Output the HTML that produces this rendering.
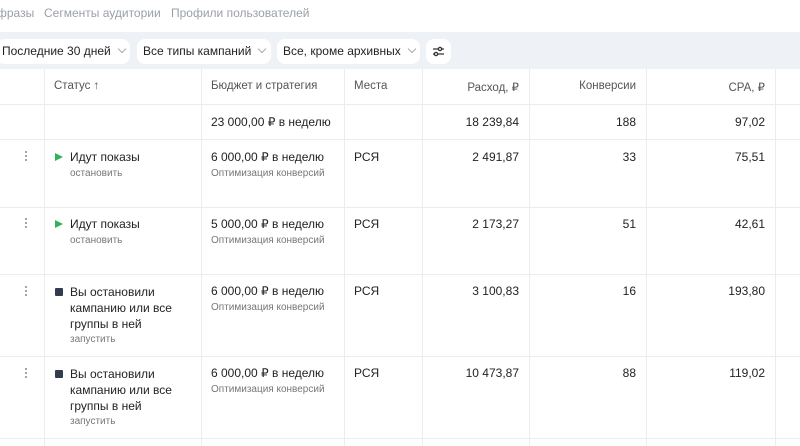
<!DOCTYPE html>
<html><head><meta charset="utf-8"><style>
*{margin:0;padding:0;box-sizing:border-box}
body{width:800px;height:446px;overflow:hidden;background:#fff;font-family:"Liberation Sans",sans-serif;color:#222;position:relative;font-size:12px}
.a{position:absolute;white-space:nowrap}
.tabs{top:6px;font-size:12px;color:#9aa0a8}
.band{position:absolute;left:0;top:32px;width:800px;height:37px;background:#eef1f6}
.btn{position:absolute;top:39px;height:25px;background:#fff;border-radius:8px;font-size:12px;color:#222;padding:5px 0 0 6px}
.chev{display:inline-block;width:6px;height:6px;border-right:1px solid #aaa;border-bottom:1px solid #aaa;transform:rotate(45deg);margin-left:8px;position:relative;top:-3px}
.vl{position:absolute;top:69px;height:377px;width:1px;background:#ececec}
.hl{position:absolute;left:0;width:800px;height:1px;background:#ececec}
.h{top:80px;color:#555;font-size:11.5px}
.r{text-align:right}
.sm{font-size:10px;color:#777}
.dots{position:absolute;left:25px;width:3px}
.dots i{display:block;width:2px;height:2px;background:#888;margin-bottom:2px;border-radius:1px}
.play{position:absolute;width:0;height:0;border-left:8px solid #2db45a;border-top:4.5px solid transparent;border-bottom:4.5px solid transparent}
.sq{position:absolute;width:8px;height:8px;background:#333c4e;border-radius:1px}
</style></head><body>
<div class="a tabs" style="left:-3px">фразы</div>
<div class="a tabs" style="left:44px">Сегменты аудитории</div>
<div class="a tabs" style="left:171px">Профили пользователей</div>
<div class="band"></div>
<div class="btn" style="left:-4px;width:134px">Последние 30 дней<span class="chev"></span></div>
<div class="btn" style="left:137px;width:134px">Все типы кампаний<span class="chev"></span></div>
<div class="btn" style="left:277px;width:143px">Все, кроме архивных<span class="chev"></span></div>
<div class="btn" style="left:426px;width:25px;padding:0"><svg width="25" height="25" viewBox="0 0 25 25"><g stroke="#333" stroke-width="1.3" fill="none"><path d="M7 10h11M7 15h11"/><circle cx="14" cy="10" r="1.6" fill="#fff"/><circle cx="10" cy="15" r="1.6" fill="#fff"/></g></svg></div>

<div class="vl" style="left:44px"></div><div class="vl" style="left:201px"></div><div class="vl" style="left:344px"></div><div class="vl" style="left:422px"></div><div class="vl" style="left:529px"></div><div class="vl" style="left:646px"></div><div class="vl" style="left:775px"></div>
<div class="hl" style="top:104px"></div><div class="hl" style="top:139px"></div><div class="hl" style="top:207px"></div><div class="hl" style="top:274px"></div><div class="hl" style="top:356px"></div><div class="hl" style="top:438px"></div>

<div class="a h" style="left:54px">Статус ↑</div>
<div class="a h" style="left:211px">Бюджет и стратегия</div>
<div class="a h" style="left:354px">Места</div>
<div class="a h r" style="right:281px">Расход, ₽</div>
<div class="a h r" style="right:164px">Конверсии</div>
<div class="a h r" style="right:35px">CPA, ₽</div>

<div class="a" style="left:211px;top:115px">23 000,00 ₽ в неделю</div>
<div class="a r" style="right:281px;top:115px">18 239,84</div>
<div class="a r" style="right:164px;top:115px">188</div>
<div class="a r" style="right:35px;top:115px">97,02</div>

<!-- row1 -->
<div class="dots" style="top:151px"><i></i><i></i><i></i></div>
<div class="play" style="left:55px;top:153px"></div>
<div class="a" style="left:70px;top:150px">Идут показы</div>
<div class="a sm" style="left:70px;top:168px">остановить</div>
<div class="a" style="left:211px;top:150px">6 000,00 ₽ в неделю</div>
<div class="a sm" style="left:211px;top:168px">Оптимизация конверсий</div>
<div class="a" style="left:354px;top:150px">РСЯ</div>
<div class="a r" style="right:281px;top:150px">2 491,87</div>
<div class="a r" style="right:164px;top:150px">33</div>
<div class="a r" style="right:35px;top:150px">75,51</div>
<!-- row2 -->
<div class="dots" style="top:218px"><i></i><i></i><i></i></div>
<div class="play" style="left:55px;top:220px"></div>
<div class="a" style="left:70px;top:217px">Идут показы</div>
<div class="a sm" style="left:70px;top:235px">остановить</div>
<div class="a" style="left:211px;top:217px">5 000,00 ₽ в неделю</div>
<div class="a sm" style="left:211px;top:235px">Оптимизация конверсий</div>
<div class="a" style="left:354px;top:217px">РСЯ</div>
<div class="a r" style="right:281px;top:217px">2 173,27</div>
<div class="a r" style="right:164px;top:217px">51</div>
<div class="a r" style="right:35px;top:217px">42,61</div>
<!-- row3 -->
<div class="dots" style="top:286px"><i></i><i></i><i></i></div>
<div class="sq" style="left:55px;top:288px"></div>
<div class="a" style="left:70px;top:284px;line-height:16px">Вы остановили<br>кампанию или все<br>группы в ней</div>
<div class="a sm" style="left:70px;top:334px">запустить</div>
<div class="a" style="left:211px;top:284px">6 000,00 ₽ в неделю</div>
<div class="a sm" style="left:211px;top:302px">Оптимизация конверсий</div>
<div class="a" style="left:354px;top:284px">РСЯ</div>
<div class="a r" style="right:281px;top:284px">3 100,83</div>
<div class="a r" style="right:164px;top:284px">16</div>
<div class="a r" style="right:35px;top:284px">193,80</div>
<!-- row4 -->
<div class="dots" style="top:368px"><i></i><i></i><i></i></div>
<div class="sq" style="left:55px;top:370px"></div>
<div class="a" style="left:70px;top:366px;line-height:16px">Вы остановили<br>кампанию или все<br>группы в ней</div>
<div class="a sm" style="left:70px;top:416px">запустить</div>
<div class="a" style="left:211px;top:366px">6 000,00 ₽ в неделю</div>
<div class="a sm" style="left:211px;top:384px">Оптимизация конверсий</div>
<div class="a" style="left:354px;top:366px">РСЯ</div>
<div class="a r" style="right:281px;top:366px">10 473,87</div>
<div class="a r" style="right:164px;top:366px">88</div>
<div class="a r" style="right:35px;top:366px">119,02</div>
</body></html>
